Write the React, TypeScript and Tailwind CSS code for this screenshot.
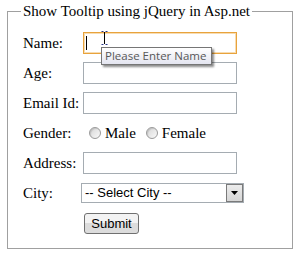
import React from 'react';

// Labelled text input used by the form rows
function TextBox({ focused }: { focused?: boolean }) {
  return (
    <div
      className={
        focused
          ? 'h-[22px] w-[154px] border border-[#e8a33c] shadow-[inset_0_0_0_1px_#f7dcb2] bg-white'
          : 'h-[22px] w-[154px] border border-[#a5acb2] bg-white'
      }
    />
  );
}

function Radio({ label }: { label: string }) {
  return (
    <div className="flex items-center gap-[4px]">
      <span className="h-[12px] w-[12px] rounded-full border border-[#9a9a9a] bg-gradient-to-br from-[#d6d6d6] to-[#fafafa] shadow-[inset_1px_1px_1px_rgba(0,0,0,0.12)]" />
      <span>{label}</span>
    </div>
  );
}

export default function App() {
  return (
    <div className="h-[256px] w-[300px] bg-white pt-[2px] font-['Liberation_Serif','Times_New_Roman',serif] text-[15px] text-black">
      <fieldset className="ml-[7px] h-[247px] w-[286px] border border-[#a0a0a0] pl-[13px] pt-[8px]">
        <legend className="px-[2px] leading-[18px]">Show Tooltip using jQuery in Asp.net</legend>

        <div className="grid grid-cols-[60px_1fr] auto-rows-[30px] items-center pl-[2px]">
          {/* Name */}
          <span>Name:</span>
          <div className="relative">
            <TextBox focused />
            {/* caret */}
            <span className="absolute left-[3px] top-[4px] h-[14px] w-[1px] bg-black" />
            {/* mouse I-beam */}
            <svg className="absolute left-[18px] top-[-1px]" width="7" height="14" viewBox="0 0 7 14">
              <path d="M0.5 0.5h2M4.5 0.5h2M0.5 13.5h2M4.5 13.5h2" stroke="#2a3a8c" strokeWidth="1" />
              <path d="M3.5 1v12" stroke="#000" strokeWidth="1" />
            </svg>
            {/* tooltip */}
            <div className="absolute left-[18px] top-[15px] flex h-[18px] w-[111px] items-center border border-[#767676] bg-gradient-to-b from-white to-[#e4e5f0] pl-[3px] font-['Open_Sans',sans-serif] text-[11.5px] leading-none text-[#575757] shadow-[2px_2px_2px_rgba(0,0,0,0.45)]">
              Please Enter Name
            </div>
          </div>

          <span>Age:</span>
          <TextBox />

          <span>Email Id:</span>
          <TextBox />

          <span>Gender:</span>
          <div className="flex items-center gap-[10px] pl-[6px]">
            <Radio label="Male" />
            <Radio label="Female" />
          </div>

          <span>Address:</span>
          <TextBox />

          <span>City:</span>
          <div className="ml-[-2px] flex h-[20px] w-[163px] items-center border border-[#a5acb2] bg-white font-['Liberation_Sans',Arial,sans-serif] text-[13px]">
            <span className="flex-1 pl-[3px] text-black">-- Select City --</span>
            <span className="flex h-[18px] w-[17px] items-center justify-center border border-[#7a7a7a] bg-gradient-to-b from-[#ececec] to-[#d6d6d6]">
              <svg width="7" height="4" viewBox="0 0 7 4">
                <path d="M0 0h7L3.5 4z" fill="#000" />
              </svg>
            </span>
          </div>

          <span />
          <div>
            <button className="ml-[1px] h-[21px] w-[55px] rounded-[3px] border border-[#707070] bg-gradient-to-b from-[#f3f3f3] from-50% to-[#dcdcdc] to-50% font-['Liberation_Sans',Arial,sans-serif] text-[13px] leading-none text-black">
              Submit
            </button>
          </div>
        </div>
      </fieldset>
    </div>
  );
}
